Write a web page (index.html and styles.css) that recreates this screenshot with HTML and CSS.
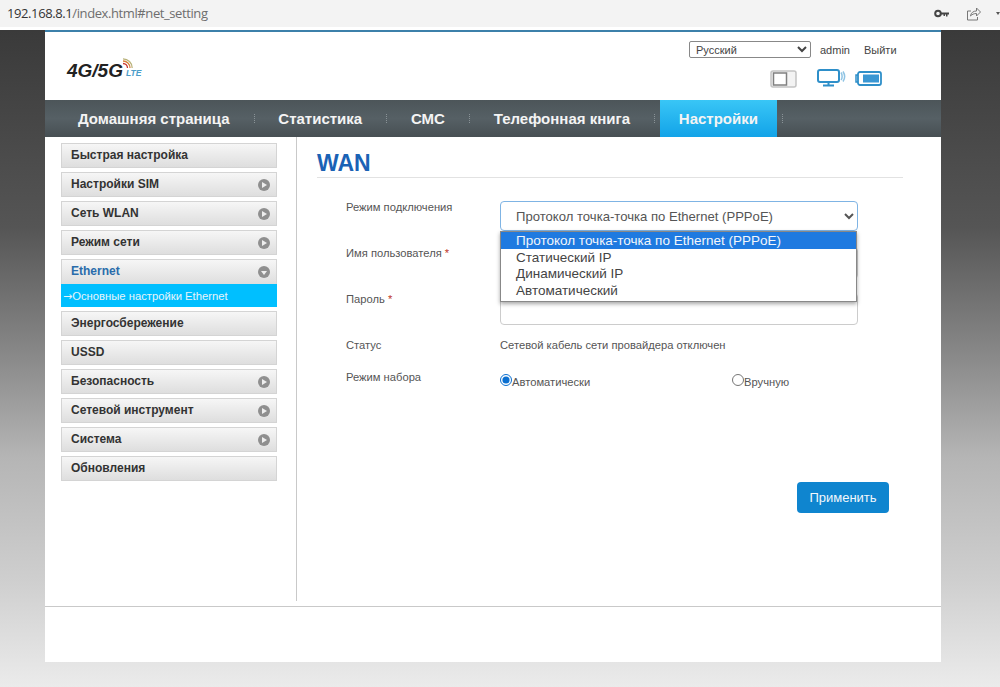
FILE: index.html
```html
<!DOCTYPE html>
<html lang="ru">
<head>
    <meta charset="UTF-8">
    <title>WAN</title>
    <link rel="stylesheet" href="styles.css">
</head>
<body>
    <div class="browser-bar">
        <div class="url"><span class="host">192.168.8.1</span>/index.html#net_setting</div>
        <svg class="bar-icon key" width="15" height="9" viewBox="0 0 15 9"><circle cx="4" cy="4.500" r="2.800" fill="none" stroke="#444" stroke-width="2"/><path d="M7 3.500h8v2h-1.500v2h-1.500v-2h-1v1.500h-1.500v-1.500h-2.500z" fill="#444"/></svg>
        <svg class="bar-icon share" width="15" height="15" viewBox="0 0 15 15" fill="none" stroke="#777" stroke-width="1"><path d="M5 5H1.500v9h10v-3"/><path d="M4.500 10c.5-3.500 3-5 6-5V2l4 4-4 4V7.500c-2.500 0-4.500.8-6 2.500z"/></svg>
        <svg class="bar-icon more" width="4" height="3" viewBox="0 0 4 3"><path d="M0 0h4L2 3z" fill="#555"/></svg>
    </div>

    <div class="page">
        <div class="router">
            <div class="header">
                <div class="logo">
                    <span class="logo-text">4G/5G</span>
                    <span class="logo-side">
                        <svg width="13" height="11" viewBox="0 0 13 11" fill="none" stroke-width="1.300"><path d="M1 5.500a4.500 4.500 0 0 1 4.500 4.500" stroke="#c9342e"/><path d="M1 3a7 7 0 0 1 7 7" stroke="#d8803a"/><path d="M1 .8a9.200 9.200 0 0 1 9.200 9.200" stroke="#b9b27a"/></svg>
                        <span class="logo-lte">LTE</span>
                    </span>
                </div>
                <div class="header-right">
                    <div class="user-row">
                        <select class="lang"><option>Русский</option></select>
                        <span class="user-link">admin</span>
                        <span class="user-link">Выйти</span>
                    </div>
                    <div class="status-icons">
                        <svg width="27" height="18" viewBox="0 0 27 18"><rect x="1" y="1" width="25" height="16" rx="2" fill="#f3f3f3" stroke="#c4c4c4" stroke-width="1.500"/><rect x="3.500" y="3" width="13" height="12" fill="#fff" stroke="#808080" stroke-width="1.500"/></svg>
                        <svg class="icon-wan" width="30" height="19" viewBox="0 0 30 19"><rect x="1" y="1" width="21" height="12" rx="2" fill="#fff" stroke="#2e8fc9" stroke-width="2"/><path d="M11.500 13v3M6 16.500h11" stroke="#2e8fc9" stroke-width="2"/><path d="M24 3.500c1.500 2 1.500 6 0 7.500M26 2.500c2 3 2 7 0 10" fill="none" stroke="#8fc4e4" stroke-width="1.500"/></svg>
                        <svg width="27" height="15" viewBox="0 0 27 15"><path d="M3 4H1v7h2" fill="none" stroke="#2e8fc9" stroke-width="1.500"/><rect x="3" y="1" width="23" height="13" rx="2" fill="#fff" stroke="#2e8fc9" stroke-width="1.800"/><rect x="8" y="3.500" width="16" height="8" fill="#3a97d3"/></svg>
                    </div>
                </div>
            </div>

            <div class="nav">
                <div class="nav-item">Домашняя страница</div>
                <div class="nav-item">Статистика</div>
                <div class="nav-item">СМС</div>
                <div class="nav-item">Телефонная книга</div>
                <div class="nav-item active">Настройки</div>
            </div>

            <div class="main">
                <div class="sidebar">
                    <div class="side-item">Быстрая настройка</div>
                    <div class="side-item has-arrow">Настройки SIM</div>
                    <div class="side-item has-arrow">Сеть WLAN</div>
                    <div class="side-item has-arrow">Режим сети</div>
                    <div class="side-group">
                        <div class="side-item has-arrow open">Ethernet</div>
                        <div class="side-sub"><span class="sub-arrow">→</span>Основные настройки Ethernet</div>
                    </div>
                    <div class="side-item">Энергосбережение</div>
                    <div class="side-item">USSD</div>
                    <div class="side-item has-arrow">Безопасность</div>
                    <div class="side-item has-arrow">Сетевой инструмент</div>
                    <div class="side-item has-arrow">Система</div>
                    <div class="side-item">Обновления</div>
                </div>

                <div class="content">
                    <h1 class="title">WAN</h1>
                    <div class="form">
                        <div class="form-row select-row">
                            <label class="form-label">Режим подключения</label>
                            <div class="form-field">
                                <select class="mode-select"><option>Протокол точка-точка по Ethernet (PPPoE)</option></select>
                                <div class="dropdown">
                                    <div class="dropdown-item selected">Протокол точка-точка по Ethernet (PPPoE)</div>
                                    <div class="dropdown-item">Статический IP</div>
                                    <div class="dropdown-item">Динамический IP</div>
                                    <div class="dropdown-item">Автоматический</div>
                                </div>
                            </div>
                        </div>
                        <div class="form-row input-row">
                            <label class="form-label">Имя пользователя <span class="req">*</span></label>
                            <div class="form-field"><input class="text-input" type="text"></div>
                        </div>
                        <div class="form-row input-row">
                            <label class="form-label">Пароль <span class="req">*</span></label>
                            <div class="form-field"><input class="text-input" type="password"></div>
                        </div>
                        <div class="form-row status-row">
                            <label class="form-label">Статус</label>
                            <div class="form-field">Сетевой кабель сети провайдера отключен</div>
                        </div>
                        <div class="form-row dial-row">
                            <label class="form-label">Режим набора</label>
                            <div class="form-field radios">
                                <label class="radio"><input type="radio" name="dial" checked>Автоматически</label>
                                <label class="radio"><input type="radio" name="dial">Вручную</label>
                            </div>
                        </div>
                    </div>
                    <div class="actions"><button class="apply">Применить</button></div>
                </div>
            </div>

            <div class="footer"></div>
        </div>
    </div>
</body>
</html>
```

FILE: styles.css
```css
html, body {
    height: 100%;
}
body {
    margin: 0;
    font-family: 'Liberation Sans', Arial, sans-serif;
    color: #333;
    background: #ebebeb;
    overflow: hidden;
}
.browser-bar {
    height: 27px;
    border-bottom: 3px solid #fff;
    background: #f3f3f3;
    display: flex;
    align-items: center;
    font-family: 'Open Sans', sans-serif;
    font-size: 13px;
    letter-spacing: -.4px;
    color: #6e6e6e;
    padding-left: 7px;
    overflow: hidden;
}
.url {
    flex: 1;
    margin-top: -1px;
}
.host {
    color: #333;
}
.bar-icon {
    flex: none;
}
.key {
    margin-right: 17px;
}
.share {
    margin-right: 15px;
}

/* page */
.page {
    height: 657px;
    padding-left: 45px;
    background: linear-gradient(to bottom, #3a3a3a 0, #555 30%, #8a8a8a 50%, #b5b5b5 65%, #cfcfcf 84%, #ebebeb 100%);
}
.router {
    width: 896px;
    height: 632px;
    background: #fff;
    display: flex;
    flex-direction: column;
}
.header {
    height: 68px;
    border-top: 2px solid #3c80aa;
    display: flex;
    justify-content: space-between;
}
.logo {
    display: flex;
    align-items: flex-end;
    margin: 27px 0 0 22px;
    height: 22px;
}
.logo-text {
    font-size: 19px;
    line-height: 20px;
    font-weight: bold;
    font-style: italic;
    color: #222;
}
.logo-side {
    display: flex;
    flex-direction: column;
    align-self: flex-start;
    margin: -1px 0 0 -1px;
}
.logo-lte {
    padding-left: 4px;
    font-size: 8.500px;
    line-height: 9px;
    font-weight: bold;
    font-style: italic;
    color: #4a9cc9;
}
.header-right {
    width: 252px;
}
.user-row {
    display: flex;
    align-items: center;
    margin-top: 9px;
    font-size: 11px;
    height: 17px;
    color: #444;
}
.lang {
    width: 122px;
    height: 17px;
    font-family: 'Liberation Sans', Arial, sans-serif;
    font-size: 11px;
    color: #444;
    background: #fff;
    border: 1px solid #888;
    border-radius: 2px;
    padding: 0 0 0 2px;
    margin-right: 9px;
}
.user-link {
    margin-right: 14px;
}
.status-icons {
    display: flex;
    align-items: center;
    gap: 20px;
    margin: 11px 0 0 81px;
    height: 19px;
}
.icon-wan {
    margin-right: -12px;
}

/* top menu */
.nav {
    height: 37px;
    padding-left: 14px;
    display: flex;
    gap: 10.800px;
    background: linear-gradient(to bottom, #4c5559, #566065 50%, #474f53);
}
.nav-item {
    position: relative;
    padding: 0 19px;
    line-height: 37px;
    font-size: 15px;
    font-weight: bold;
    color: #f4f4f4;
    white-space: nowrap;
}
.nav-item::after {
    content: "";
    position: absolute;
    right: -6px;
    top: 14px;
    height: 9px;
    border-right: 1px dotted #8a9397;
}
.nav-item.active {
    background: linear-gradient(to bottom, #39c6f6, #12a3e8);
}
.main {
    flex: none;
    height: 464px;
    display: flex;
}

/* left menu */
.sidebar {
    width: 216px;
    padding: 6px 19px 0 16px;
    display: flex;
    flex-direction: column;
    gap: 4px;
    border-right: 1px solid #c9c9c9;
}
.side-item {
    height: 25px;
    box-sizing: border-box;
    line-height: 23px;
    padding-left: 9px;
    font-size: 12px;
    font-weight: bold;
    color: #333;
    border: 1px solid #d4d4d4;
    background: linear-gradient(to bottom, #f6f6f6, #dedede);
    position: relative;
}
.has-arrow::after {
    content: "";
    position: absolute;
    right: 6px;
    top: 6px;
    width: 12px;
    height: 12px;
    border-radius: 50%;
    background: #8f8f8f;
}
.has-arrow::before {
    content: "";
    position: absolute;
    z-index: 1;
    right: 9px;
    top: 9px;
    border-left: 5px solid #eee;
    border-top: 3px solid transparent;
    border-bottom: 3px solid transparent;
}
.has-arrow.open {
    color: #2a6cab;
    border-bottom: 0;
}
.has-arrow.open::before {
    right: 9px;
    top: 11px;
    border-top: 4px solid #eee;
    border-left: 3px solid transparent;
    border-right: 3px solid transparent;
    border-bottom: 0;
}
.side-sub {
    height: 23px;
    line-height: 24px;
    padding-left: 2px;
    font-size: 11.250px;
    color: #e8f4fa;
    background: #00bfff;
    white-space: nowrap;
}
.sub-arrow {
    font-family: 'DejaVu Sans', sans-serif;
    font-size: 11px;
}

/* content */
.content {
    flex: 1;
    padding-left: 20px;
}
.title {
    margin: 13px 0 0;
    width: 586px;
    height: 27px;
    line-height: 26px;
    font-size: 23px;
    font-weight: bold;
    color: #1a62b5;
    border-bottom: 1px solid #e2e2e2;
}
.form {
    padding-left: 29px;
    font-size: 11.200px;
    color: #555;
}
.form-row {
    display: flex;
}
.form-label {
    width: 154px;
    flex: none;
}
.req {
    color: #c0392b;
}
.form-field {
    position: relative;
    width: 358px;
}
.select-row {
    margin-top: 23px;
    height: 46px;
}
.input-row {
    height: 46px;
    align-items: flex-start;
}
.mode-select {
    display: block;
    width: 358px;
    height: 30px;
    box-sizing: border-box;
    padding-left: 11px;
    font-family: 'Liberation Sans', Arial, sans-serif;
    font-size: 13.100px;
    color: #555;
    background: #fff;
    border: 1px solid #7fb4e4;
    border-radius: 4px;
}
.dropdown {
    position: absolute;
    z-index: 2;
    left: 0;
    top: 30px;
    width: 355px;
    height: 69px;
    border: 1px solid #888;
    background: #fff;
    box-shadow: 0 2px 4px rgba(0, 0, 0, .35);
    font-size: 13.500px;
    color: #444;
}
.dropdown-item {
    height: 16.700px;
    line-height: 17px;
    padding-left: 15px;
    white-space: nowrap;
}
.dropdown-item.selected {
    background: #1f7ae0;
    color: #f2f6fb;
}
.text-input {
    display: block;
    width: 358px;
    height: 32px;
    box-sizing: border-box;
    border: 1px solid #ccc;
    border-radius: 4px;
    background: #fff;
}
.status-row {
    height: 32px;
    line-height: 13px;
}
.dial-row .form-label {
    line-height: 13px;
}
.radios {
    display: flex;
    margin-top: 4px;
}
.radio {
    display: flex;
    flex: none;
    align-items: center;
    width: 232px;
    height: 13px;
}
.radio input {
    width: 12px;
    height: 12px;
    margin: 0 0 4px;
    accent-color: #0a6fd0;
}
.actions {
    width: 572px;
    margin-top: 94px;
    display: flex;
    justify-content: flex-end;
}
.apply {
    width: 92px;
    height: 31px;
    border: 0;
    border-radius: 4px;
    background: #0f85cf;
    color: #f2f8fc;
    font-family: 'Liberation Sans', Arial, sans-serif;
    font-size: 13px;
}
.footer {
    margin-top: 5px;
    border-top: 1px solid #c9c9c9;
    flex: 1;
}
```
